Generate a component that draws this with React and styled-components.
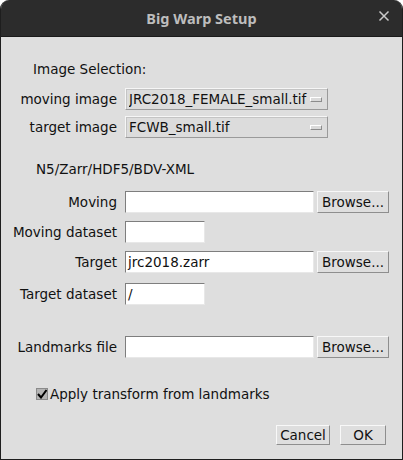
import React from "react";
import styled, { createGlobalStyle } from "styled-components";

const Global = createGlobalStyle`
  html, body { margin: 0; padding: 0; background: #ffffff; }
  body { font-family: "DejaVu Sans", "Liberation Sans", sans-serif; }
`;

const Window = styled.div`
  width: 403px;
  height: 460px;
  box-sizing: border-box;
  background: #dedede;
  border: 1px solid #1e1e1e;
  border-top: none;
  border-radius: 9px 9px 0 0;
  overflow: hidden;
  display: flex;
  flex-direction: column;
  color: #111;
  font-size: 13.5px;
`;

const TitleBar = styled.div`
  height: 37px;
  flex: none;
  background: #2c2c2c;
  border-bottom: 1px solid #1a1a1a;
  box-sizing: border-box;
  display: flex;
  align-items: center;
  justify-content: center;
  position: relative;
  font-family: "Noto Sans", "Open Sans", sans-serif;
  font-weight: 700;
  font-size: 14.5px;
  color: #bdbdbd;
`;

const Close = styled.span`
  position: absolute;
  right: 11px;
  top: 9px;
  width: 14px;
  height: 14px;
  display: flex;
`;

const Body = styled.div`
  display: flex;
  flex-direction: column;
`;

const Heading = styled.div`
  margin-top: ${(p) => p.$mt}px;
  padding-left: ${(p) => p.$indent}px;
  height: 16px;
  line-height: 16px;
  white-space: nowrap;
`;

const Row = styled.div`
  margin-top: ${(p) => p.$mt}px;
  display: flex;
  align-items: center;
  height: 22px;
`;

const Label = styled.div`
  width: 116px;
  margin-right: 8px;
  text-align: right;
  white-space: nowrap;
  line-height: 16px;
`;

const Combo = styled.div`
  width: 203px;
  height: 22px;
  box-sizing: border-box;
  background: #dcdcdc;
  border-top: 1px solid #f6f6f6;
  border-left: 1px solid #f6f6f6;
  border-right: 1px solid #9a9a9a;
  border-bottom: 1px solid #9a9a9a;
  box-shadow: inset 1px 1px 0 #c4c4c4;
  display: flex;
  align-items: center;
  padding: 0 5px 0 3px;
  white-space: nowrap;
`;

const ComboText = styled.span`
  flex: 1;
  overflow: hidden;
`;

const ComboKnob = styled.span`
  width: 12px;
  height: 5px;
  box-sizing: border-box;
  background: #dadada;
  border-top: 1px solid #ffffff;
  border-left: 1px solid #ffffff;
  border-right: 1px solid #8c8c8c;
  border-bottom: 1px solid #8c8c8c;
  flex: none;
`;

const Field = styled.div`
  width: ${(p) => p.$w}px;
  height: 22px;
  box-sizing: border-box;
  background: #ffffff;
  border-top: 1px solid #7e7e7e;
  border-left: 1px solid #7e7e7e;
  border-right: 1px solid #e8e8e8;
  border-bottom: 1px solid #e8e8e8;
  padding: 0 2px;
  display: flex;
  align-items: center;
  white-space: nowrap;
  overflow: hidden;
`;

const Button = styled.div`
  width: ${(p) => p.$w}px;
  height: ${(p) => p.$h}px;
  margin-left: ${(p) => p.$ml}px;
  box-sizing: border-box;
  background: #dedede;
  border-top: 1px solid #f8f8f8;
  border-left: 1px solid #f8f8f8;
  border-right: 1px solid #8e8e8e;
  border-bottom: 1px solid #8e8e8e;
  display: flex;
  align-items: center;
  justify-content: center;
  white-space: nowrap;
`;

const CheckRow = styled.div`
  margin-top: ${(p) => p.$mt}px;
  padding-left: 35px;
  display: flex;
  align-items: center;
  height: 16px;
`;

const CheckBox = styled.span`
  width: 12px;
  height: 12px;
  box-sizing: border-box;
  background: #b4b4b4;
  border: 1px solid #8a8a8a;
  display: flex;
  align-items: center;
  justify-content: center;
  margin-right: 2px;
`;

const Footer = styled.div`
  margin-top: ${(p) => p.$mt}px;
  display: flex;
  justify-content: flex-end;
  padding-right: 16px;
`;

export default function App() {
  return (
    <>
      <Global />
      <Window>
        <TitleBar>
          Big Warp Setup
          <Close>
            <svg width="14" height="14" viewBox="0 0 14 14">
              <path d="M2.5 2.5 L11.5 11.5 M11.5 2.5 L2.5 11.5" stroke="#c9c9c9" strokeWidth="1.5" />
            </svg>
          </Close>
        </TitleBar>
        <Body>
          <Heading $mt={24} $indent={32}>Image Selection:</Heading>
          <Row $mt={11}>
            <Label>moving image</Label>
            <Combo>
              <ComboText>JRC2018_FEMALE_small.tif</ComboText>
              <ComboKnob />
            </Combo>
          </Row>
          <Row $mt={6}>
            <Label>target image</Label>
            <Combo>
              <ComboText>FCWB_small.tif</ComboText>
              <ComboKnob />
            </Combo>
          </Row>
          <Heading $mt={23} $indent={35}>N5/Zarr/HDF5/BDV-XML</Heading>
          <Row $mt={14}>
            <Label>Moving</Label>
            <Field $w={189} />
            <Button $w={72} $h={22} $ml={3}>Browse...</Button>
          </Row>
          <Row $mt={8}>
            <Label>Moving dataset</Label>
            <Field $w={80} />
          </Row>
          <Row $mt={8}>
            <Label>Target</Label>
            <Field $w={189}>jrc2018.zarr</Field>
            <Button $w={72} $h={22} $ml={3}>Browse...</Button>
          </Row>
          <Row $mt={10}>
            <Label>Target dataset</Label>
            <Field $w={80}>/</Field>
          </Row>
          <Row $mt={31}>
            <Label>Landmarks file</Label>
            <Field $w={189} />
            <Button $w={72} $h={22} $ml={3}>Browse...</Button>
          </Row>
          <CheckRow $mt={28}>
            <CheckBox>
              <svg width="10" height="10" viewBox="0 0 10 10">
                <path d="M1 5 L4 8.5 L9.5 1" stroke="#000" strokeWidth="2" fill="none" />
              </svg>
            </CheckBox>
            Apply transform from landmarks
          </CheckRow>
          <Footer $mt={23}>
            <Button $w={54} $h={20} $ml={0}>Cancel</Button>
            <Button $w={46} $h={20} $ml={10}>OK</Button>
          </Footer>
        </Body>
      </Window>
    </>
  );
}
